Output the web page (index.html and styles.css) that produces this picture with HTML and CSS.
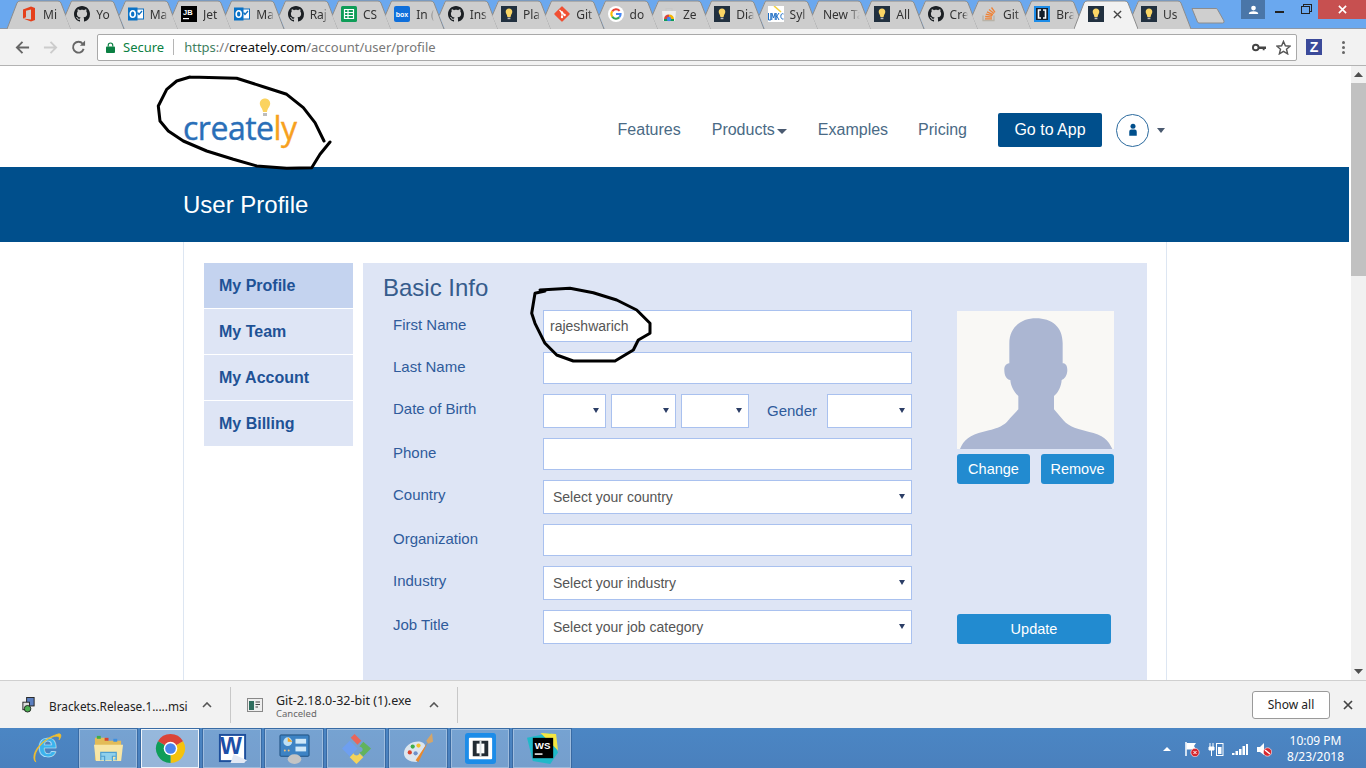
FILE: index.html
```html
<!DOCTYPE html>
<html lang="en">
<head>
<meta charset="utf-8">
<title>User Profile</title>
<link rel="stylesheet" href="styles.css">
</head>
<body>
<svg class="sprite" aria-hidden="true">
  <symbol id="tab-first" viewBox="0 0 64 29"><path d="M0 29L10 3Q11 1 13 1H51Q53 1 54 3L64 29Z" fill="#cdcdcd"/><path d="M0 29L10 3Q11 1 13 1H51Q53 1 54 3L64 29" fill="none" stroke="#8c8c8c"/></symbol>
  <symbol id="tab-mid" viewBox="0 0 64 29"><path d="M11 1L5.3 15.4L10.7 29H64L54 3Q53 1 51 1Z" fill="#cdcdcd"/><path d="M11.5 1L5.3 15.4M11.5 1H51Q53 1 54 3L64 29" fill="none" stroke="#8c8c8c"/></symbol>
  <symbol id="tab-active" viewBox="0 0 64 29"><path d="M0 29L10 3Q11 1 13 1H51Q53 1 54 3L64 29Z" fill="#f2f2f2"/><path d="M0 29L10 3Q11 1 13 1H51Q53 1 54 3L64 29" fill="none" stroke="#8c8c8c"/></symbol>
  <symbol id="i-office" viewBox="0 0 16 16"><path d="M2 3.500L10 0.500L14 2V14L10 15.500L2 12.500L10 13.500V3.500L5 4.700V11.300L2 12.500Z" fill="#e5401b"/></symbol>
  <symbol id="i-github" viewBox="0 0 16 16"><path fill="#1b1f23" d="M8 0C3.58 0 0 3.58 0 8c0 3.54 2.29 6.53 5.47 7.59.4.07.55-.17.55-.38 0-.19-.01-.82-.01-1.49-2.01.37-2.53-.49-2.69-.94-.09-.23-.48-.94-.82-1.13-.28-.15-.68-.52-.01-.53.63-.01 1.08.58 1.23.82.72 1.21 1.87.87 2.33.66.07-.52.28-.87.51-1.07-1.78-.2-3.64-.89-3.64-3.95 0-.87.31-1.59.82-2.15-.08-.2-.36-1.02.08-2.12 0 0 .67-.21 2.2.82.64-.18 1.32-.27 2-.27.68 0 1.36.09 2 .27 1.53-1.04 2.2-.82 2.2-.82.44 1.1.16 1.92.08 2.12.51.56.82 1.27.82 2.15 0 3.07-1.87 3.75-3.65 3.95.29.25.54.73.54 1.48 0 1.07-.01 1.93-.01 2.2 0 .21.15.46.55.38A8.013 8.013 0 0016 8c0-4.42-3.58-8-8-8z"/></symbol>
  <symbol id="i-outlook" viewBox="0 0 16 16"><rect x="7" y="3" width="8.500" height="10" fill="#fff" stroke="#0d6fc0"/><path d="M9.500 6.500L11 8.500L14 5" stroke="#0d6fc0" fill="none" stroke-width="1.300"/><rect x="0" y="1.500" width="9.500" height="13" fill="#0a72c6"/><ellipse cx="4.700" cy="8" rx="2.500" ry="3.300" fill="none" stroke="#fff" stroke-width="1.600"/></symbol>
  <symbol id="i-sheets" viewBox="0 0 16 16"><rect width="16" height="16" rx="1.500" fill="#0f9d58"/><path d="M3.500 3.500H12.500V12.500H3.500ZM3.500 6.500H12.500M3.500 9.500H12.500M7 3.500V12.500" fill="none" stroke="#fff" stroke-width="1.200"/></symbol>
  <symbol id="i-bulb" viewBox="0 0 16 16"><rect width="16" height="16" fill="#21303f"/><path d="M8 2.500C5.900 2.500 4.700 4 4.700 5.800C4.700 7.500 6 8.500 6.400 11H9.600C10 8.500 11.300 7.500 11.300 5.800C11.300 4 10.100 2.500 8 2.500Z" fill="#fad565"/><rect x="6.600" y="11.600" width="2.800" height="1.600" fill="#b9b9b9"/></symbol>
  <symbol id="i-git" viewBox="0 0 16 16"><rect x="2.300" y="2.300" width="11.400" height="11.400" rx="1" transform="rotate(45 8 8)" fill="#f05033"/><path d="M5.500 4L8 6.500V11M8 6.500L10.600 9" stroke="#fff" stroke-width="1.100" fill="none"/><circle cx="8" cy="11" r="1.200" fill="#fff"/><circle cx="8" cy="6.500" r="1.200" fill="#fff"/><circle cx="10.600" cy="9" r="1.200" fill="#fff"/></symbol>
  <symbol id="i-google" viewBox="0 0 16 16"><circle cx="8" cy="8" r="8" fill="#fff"/><path d="M11.600 4.900A4.600 4.600 0 0 0 4.200 5.400" fill="none" stroke="#ea4335" stroke-width="2"/><path d="M4.200 5.400A4.600 4.600 0 0 0 4.200 10.600" fill="none" stroke="#fbbc05" stroke-width="2"/><path d="M4.200 10.600A4.600 4.600 0 0 0 11.400 11.200" fill="none" stroke="#34a853" stroke-width="2"/><path d="M11.400 11.200A4.600 4.600 0 0 0 12.600 8H8" fill="none" stroke="#4285f4" stroke-width="2"/></symbol>
  <symbol id="i-store" viewBox="0 0 16 16"><path d="M1 5H15L14 15H2Z" fill="#eeeeee"/><path d="M5 5V2.500H11V5" fill="none" stroke="#c8c8c8" stroke-width="1.200"/><path d="M3 13A5 5 0 0 1 8 8.500L8 13Z" fill="#db4437"/><path d="M8 8.500A5 5 0 0 1 13 13H8Z" fill="#f4b400"/><path d="M3 13H13V15H3Z" fill="#0f9d58"/><circle cx="8" cy="13" r="2.200" fill="#4285f4"/></symbol>
  <symbol id="i-umkc" viewBox="0 0 16 16"><rect width="16" height="16" fill="#fff"/><path d="M6 0L13 6" stroke="#f5d23c" stroke-width="1.600"/><path d="M0.500 7V14H2.800V7M3.800 14V7L5.500 12L7.200 7V14M8.200 7V14M8.200 11L11 7M8.800 10L11 14M15.500 8C12 6 11.800 14 15.500 13" fill="none" stroke="#1f6fc4"/></symbol>
  <symbol id="i-so" viewBox="0 0 16 16"><path d="M2 9.500V14.500H13V9.500" fill="none" stroke="#b8b2a7" stroke-width="1.300"/><path d="M4 12.800H11M4.200 10.500L11 11.200M4.800 8.200L11.400 9.700M6 5.800L12 8.600M8 3.500L13 7.400M10.500 1.500L14 6.300" fill="none" stroke="#ef8236" stroke-width="1.300"/></symbol>
  <symbol id="i-brackets" viewBox="0 0 16 16"><rect width="16" height="16" fill="#1c8ce8"/><rect x="2" y="2" width="12" height="12" fill="#141f2b"/><path d="M7 4H4.500V12H7M9 4H11.500V12H9" fill="none" stroke="#fff" stroke-width="1.600"/></symbol>
</svg>

<header class="tabstrip">
  <div class="tabs">
    <div class="tab"><svg class="tab-shape"><use href="#tab-first"/></svg><svg class="fav"><use href="#i-office"/></svg><span class="tab-title">Mi</span></div>
    <div class="tab"><svg class="tab-shape"><use href="#tab-mid"/></svg><svg class="fav"><use href="#i-github"/></svg><span class="tab-title">Yo</span></div>
    <div class="tab"><svg class="tab-shape"><use href="#tab-mid"/></svg><svg class="fav"><use href="#i-outlook"/></svg><span class="tab-title">Ma</span></div>
    <div class="tab"><svg class="tab-shape"><use href="#tab-mid"/></svg><svg class="fav" viewBox="0 0 16 16"><rect width="16" height="16" fill="#000"/><text x="2" y="8.500" class="icon-jb">JB</text><rect x="2" y="12" width="6" height="1.200" fill="#fff"/></svg><span class="tab-title">Jet</span></div>
    <div class="tab"><svg class="tab-shape"><use href="#tab-mid"/></svg><svg class="fav"><use href="#i-outlook"/></svg><span class="tab-title">Ma</span></div>
    <div class="tab"><svg class="tab-shape"><use href="#tab-mid"/></svg><svg class="fav"><use href="#i-github"/></svg><span class="tab-title">Raj</span></div>
    <div class="tab"><svg class="tab-shape"><use href="#tab-mid"/></svg><svg class="fav"><use href="#i-sheets"/></svg><span class="tab-title">CS</span></div>
    <div class="tab"><svg class="tab-shape"><use href="#tab-mid"/></svg><svg class="fav" viewBox="0 0 16 16"><rect width="16" height="16" rx="2" fill="#0f6fdb"/><text x="8" y="10.500" class="icon-box">box</text></svg><span class="tab-title">In (</span></div>
    <div class="tab"><svg class="tab-shape"><use href="#tab-mid"/></svg><svg class="fav"><use href="#i-github"/></svg><span class="tab-title">Ins</span></div>
    <div class="tab"><svg class="tab-shape"><use href="#tab-mid"/></svg><svg class="fav"><use href="#i-bulb"/></svg><span class="tab-title">Pla</span></div>
    <div class="tab"><svg class="tab-shape"><use href="#tab-mid"/></svg><svg class="fav"><use href="#i-git"/></svg><span class="tab-title">Git</span></div>
    <div class="tab"><svg class="tab-shape"><use href="#tab-mid"/></svg><svg class="fav"><use href="#i-google"/></svg><span class="tab-title">do</span></div>
    <div class="tab"><svg class="tab-shape"><use href="#tab-mid"/></svg><svg class="fav"><use href="#i-store"/></svg><span class="tab-title">Ze</span></div>
    <div class="tab"><svg class="tab-shape"><use href="#tab-mid"/></svg><svg class="fav"><use href="#i-bulb"/></svg><span class="tab-title">Dia</span></div>
    <div class="tab"><svg class="tab-shape"><use href="#tab-mid"/></svg><svg class="fav"><use href="#i-umkc"/></svg><span class="tab-title">Syl</span></div>
    <div class="tab tab-plain"><svg class="tab-shape"><use href="#tab-mid"/></svg><span class="tab-title">New Ta</span></div>
    <div class="tab"><svg class="tab-shape"><use href="#tab-mid"/></svg><svg class="fav"><use href="#i-bulb"/></svg><span class="tab-title">All</span></div>
    <div class="tab"><svg class="tab-shape"><use href="#tab-mid"/></svg><svg class="fav"><use href="#i-github"/></svg><span class="tab-title">Cre</span></div>
    <div class="tab"><svg class="tab-shape"><use href="#tab-mid"/></svg><svg class="fav"><use href="#i-so"/></svg><span class="tab-title">Git</span></div>
    <div class="tab"><svg class="tab-shape"><use href="#tab-mid"/></svg><svg class="fav"><use href="#i-brackets"/></svg><span class="tab-title">Bra</span></div>
    <div class="tab tab-active"><svg class="tab-shape"><use href="#tab-active"/></svg><svg class="fav"><use href="#i-bulb"/></svg><svg class="tab-close" viewBox="0 0 10 10"><path d="M1 1L9 9M9 1L1 9" stroke="#444" stroke-width="1.500"/></svg></div>
    <div class="tab"><svg class="tab-shape"><use href="#tab-mid"/></svg><svg class="fav"><use href="#i-bulb"/></svg><span class="tab-title">Us</span></div>
  </div>
  <svg class="newtab" viewBox="0 0 34 17"><path d="M1 1.500H25Q26 1.500 26.500 2.500L33 14Q33.500 16 31.500 16H8Q7 16 6.500 15Z" fill="#cfcfcf" stroke="#8c8c8c"/></svg>
  <div class="winctl">
    <div class="win-user"><svg viewBox="0 0 14 12" class="win-user-ico"><circle cx="7" cy="3.500" r="3" fill="#fff"/><path d="M1 11Q1 7.500 7 7.500T13 11Z" fill="#fff"/></svg></div>
    <div class="win-btn"><span class="win-min"></span></div>
    <div class="win-btn"><span class="win-max"></span></div>
    <div class="win-close"><svg viewBox="0 0 10 10" class="win-x"><path d="M1 1L9 9M9 1L1 9" stroke="#fff" stroke-width="1.800"/></svg></div>
  </div>
</header>

<nav class="toolbar">
  <svg class="tb-ico" viewBox="0 0 16 16"><path d="M15 8H2.500M8 2L2 8L8 14" fill="none" stroke="#666" stroke-width="2"/></svg>
  <svg class="tb-ico tb-fwd" viewBox="0 0 16 16"><path d="M1 8H13.500M8 2L14 8L8 14" fill="none" stroke="#ccc" stroke-width="2"/></svg>
  <svg class="tb-ico tb-reload" viewBox="0 0 16 16"><path d="M13.500 9.500A5.800 5.800 0 1 1 12.500 4" fill="none" stroke="#666" stroke-width="2"/><path d="M9.500 6H15V0.500Z" fill="#666"/></svg>
  <div class="omnibox">
    <svg class="lock" viewBox="0 0 10 12"><path d="M2.500 5V3.500A2.500 2.500 0 0 1 7.500 3.500V5" fill="none" stroke="#0b8043" stroke-width="1.300"/><rect y="5" width="10" height="7" rx="1" fill="#0b8043"/></svg>
    <span class="secure">Secure</span>
    <span class="omni-sep"></span>
    <span class="url"><span class="url-scheme">https</span><span class="url-path">://</span><span class="url-host">creately.com</span><span class="url-path">/account/user/profile</span></span>
    <svg class="key" viewBox="0 0 15 9"><circle cx="4" cy="4.500" r="3" fill="none" stroke="#444" stroke-width="2"/><path d="M7 3.500H15V6H13.500V7.500H11.500V6H7Z" fill="#444"/></svg>
    <svg class="star" viewBox="0 0 16 16"><path d="M8 1.500L10 6.200L15 6.600L11.200 9.900L12.400 14.800L8 12.200L3.600 14.800L4.800 9.900L1 6.600L6 6.200Z" fill="none" stroke="#555" stroke-width="1.500"/></svg>
  </div>
  <span class="ext-z">Z</span>
  <span class="menu-dots"><i></i><i></i><i></i></span>
</nav>

<div class="viewport">
  <main class="page">
    <div class="site-head">
      <a class="logo"><span class="logo-blue">create</span><span class="logo-orange">ly</span>
        <svg class="logo-bulb" viewBox="0 0 12 19"><path d="M6 0.500C3 0.500 0.800 2.800 0.800 5.500C0.800 8.500 3.500 10 4 14H8C8.500 10 11.200 8.500 11.200 5.500C11.200 2.800 9 0.500 6 0.500Z" fill="#fbd35f"/><rect x="4" y="15" width="4" height="3" fill="#bdbdbd"/></svg>
      </a>
      <div class="site-nav">
        <span class="nav-link">Features</span>
        <span class="nav-link">Products<i class="caret"></i></span>
        <span class="nav-link nav-link-tight">Examples</span>
        <span class="nav-link">Pricing</span>
        <span class="goapp">Go to App</span>
        <span class="avatar-btn"><svg viewBox="0 0 12 16" class="avatar-ico"><circle cx="6" cy="3.500" r="3" fill="#004f8c"/><path d="M1.500 15V10Q1.500 7.500 4 7.500H8Q10.500 7.500 10.500 10V15Z" fill="#004f8c"/></svg></span>
        <i class="caret caret-user"></i>
      </div>
    </div>
    <div class="banner"><h1 class="banner-title">User Profile</h1></div>
    <div class="content">
      <ul class="side">
        <li class="side-item side-on">My Profile</li>
        <li class="side-item">My Team</li>
        <li class="side-item">My Account</li>
        <li class="side-item">My Billing</li>
      </ul>
      <section class="panel">
        <h2 class="panel-title">Basic Info</h2>
        <div class="panel-body">
          <form class="form">
            <div class="row"><label class="lbl">First Name</label><input class="field" value="rajeshwarich"></div>
            <div class="row"><label class="lbl">Last Name</label><input class="field"></div>
            <div class="row row-sel"><label class="lbl">Date of Birth</label>
              <div class="dob">
                <span class="sel sel-d"><select class="field"><option></option></select></span>
                <span class="sel sel-m"><select class="field"><option></option></select></span>
                <span class="sel sel-y"><select class="field"><option></option></select></span>
                <span class="gender-lbl">Gender</span>
                <span class="sel sel-g"><select class="field"><option></option></select></span>
              </div>
            </div>
            <div class="row"><label class="lbl">Phone</label><input class="field"></div>
            <div class="row row-sel"><label class="lbl">Country</label><span class="sel"><select class="field"><option>Select your country</option></select></span></div>
            <div class="row"><label class="lbl">Organization</label><input class="field"></div>
            <div class="row row-sel"><label class="lbl">Industry</label><span class="sel"><select class="field"><option>Select your industry</option></select></span></div>
            <div class="row row-sel"><label class="lbl">Job Title</label><span class="sel"><select class="field"><option>Select your job category</option></select></span></div>
          </form>
          <aside class="photo">
            <div class="photo-box">
              <svg viewBox="51 33 471 414" class="silhouette"><path d="M60 447C70 420 90 405 130 395C180 385 195 375 210 355L235 328V288C220 275 212 255 211 240C198 238 192 225 193 205C195 192 205 190 208 190V130C208 80 245 55 288 55C335 55 368 80 368 130V190C375 190 382 195 382 210C382 228 372 238 365 240C364 258 355 278 342 288V328L365 355C380 375 400 385 445 395C490 405 505 420 517 447Z" fill="#abb6d2"/></svg>
            </div>
            <div class="photo-btns"><span class="btn">Change</span><span class="btn">Remove</span></div>
            <span class="btn btn-update">Update</span>
          </aside>
        </div>
      </section>
    </div>
  </main>
  <div class="scrollbar">
    <svg class="sb-arrow" viewBox="0 0 9 5"><path d="M0 5L4.500 0L9 5Z" fill="#505050"/></svg>
    <div class="sb-track"><div class="sb-thumb"></div></div>
    <svg class="sb-arrow" viewBox="0 0 9 5"><path d="M0 0L4.500 5L9 0Z" fill="#505050"/></svg>
  </div>
</div>

<section class="dlbar">
  <div class="dl dl-1">
    <svg class="dl-ico" viewBox="0 0 16 18"><rect x="6" y="1" width="8" height="9" fill="#5b7fc0" stroke="#222"/><rect x="2" y="6" width="7" height="8" fill="#ddd" stroke="#222"/><circle cx="7" cy="13" r="3.500" fill="#4caf50" stroke="#222"/></svg>
    <span class="dl-name">Brackets.Release.1.....msi</span>
    <svg class="chev" viewBox="0 0 10 6"><path d="M1 5L5 1L9 5" fill="none" stroke="#555" stroke-width="1.600"/></svg>
  </div>
  <div class="dl dl-2">
    <svg class="dl-ico dl-ico2" viewBox="0 0 16 14"><rect x="0.500" y="0.500" width="15" height="13" fill="#eee" stroke="#888"/><rect x="2" y="3" width="5" height="9" fill="#2f6d5e"/><path d="M8.500 4H13M8.500 6.500H13M8.500 9H11" stroke="#444"/></svg>
    <div class="dl-text"><span class="dl-name">Git-2.18.0-32-bit (1).exe</span><span class="dl-status">Canceled</span></div>
    <svg class="chev" viewBox="0 0 10 6"><path d="M1 5L5 1L9 5" fill="none" stroke="#555" stroke-width="1.600"/></svg>
  </div>
  <span class="showall">Show all</span>
  <svg class="dl-close" viewBox="0 0 10 10"><path d="M1 1L9 9M9 1L1 9" stroke="#444" stroke-width="1.700"/></svg>
</section>

<footer class="taskbar">
  <div class="task task-ie">
    <svg viewBox="0 0 32 32" class="task-ico"><text x="17" y="25" class="ie-e">e</text><path d="M5 30C-1 25 6 8 28 1C31 0 32 3 29 7C31 2 24 3 20 5C9 10 1 23 5 30Z" fill="#f5c02c" stroke="#f5c02c" stroke-width="0.800"/></svg>
  </div>
  <div class="task"><svg viewBox="0 0 32 32" class="task-ico"><path d="M2 5H13L15 8H29V28H2Z" fill="#e3bc58"/><path d="M1 12H31L29 29H3Z" fill="#f8e6a6"/><path d="M8 28V20H24V28M8 24H12V29M24 24H20V29" fill="#8fd0ec" stroke="#4f9fd0" stroke-width="1.200"/><rect x="4" y="3" width="4" height="3" fill="#3fae49"/><rect x="12" y="5" width="4" height="3" fill="#d8432f"/><rect x="21" y="6" width="4" height="3" fill="#3d8fe0"/></svg></div>
  <div class="task task-on"><svg viewBox="0 0 32 32" class="task-ico"><path d="M16 16L3 8.500A15 15 0 0 1 29 8.500Z" fill="#db4437"/><path d="M16 16L29 8.500A15 15 0 0 1 16 31Z" fill="#f4c20d"/><path d="M16 16L16 31A15 15 0 0 1 3 8.500Z" fill="#0f9d58"/><circle cx="16" cy="16" r="7" fill="#fff"/><circle cx="16" cy="16" r="5.500" fill="#4a85ec"/></svg></div>
  <div class="task"><svg viewBox="0 0 32 32" class="task-ico"><rect x="3" y="2" width="26" height="27" fill="#fff" stroke="#1d4f9c" stroke-width="2"/><path d="M17 22L31 28L28 31H14Z" fill="#e3e9f4"/><text x="14.500" y="22" class="word-w">W</text></svg></div>
  <div class="task"><svg viewBox="0 0 32 32" class="task-ico"><rect x="1" y="2" width="30" height="22" rx="1" fill="#3d83c4" stroke="#1d4f80"/><circle cx="9" cy="9" r="4.500" fill="#bde0f5"/><path d="M9 4.500L14 9L9 9Z" fill="#f5a623"/><circle cx="6" cy="18" r="1" fill="#f5c27a"/><circle cx="10" cy="18" r="1" fill="#f5c27a"/><rect x="17" y="6" width="11" height="5" fill="#cfe8f8"/><rect x="17" y="14" width="11" height="5" fill="#cfe8f8"/><ellipse cx="16" cy="27" rx="7" ry="5" fill="#c4c4c4"/></svg></div>
  <div class="task"><svg viewBox="0 0 32 32" class="task-ico"><path d="M1 16L9 8L17 16L9 24Z" fill="#6e9ff0"/><path d="M10 5L14 1L21 8L17 12Z" fill="#e8665a"/><path d="M19 14L23 9L31 16L23 24L19 20C23 20 24 15 19 14Z" fill="#62b35c"/><path d="M9 25L13 21C14 24 18 24 19 21L23 25L16 32Z" fill="#f5d35a"/></svg></div>
  <div class="task"><svg viewBox="0 0 32 32" class="task-ico"><path d="M1 21C1 13 10 8 18 9C22 10 24 13 22 15L14 30C7 30 1 27 1 21Z" fill="#dde6ee"/><circle cx="7" cy="20" r="2.200" fill="#d8432f"/><circle cx="10" cy="14" r="2.200" fill="#3fae49"/><circle cx="16" cy="13" r="2.200" fill="#f5c02c"/><circle cx="13" cy="21" r="2.200" fill="#6f90c8"/><path d="M26 9L16 30L13 28Z" fill="#e8892e"/><path d="M24 8L30 0L31 9L26 11Z" fill="#d3a56a"/></svg></div>
  <div class="task"><svg viewBox="0 0 32 32" class="task-ico"><rect x="0" y="0" width="32" height="32" rx="3" fill="#1c8ce8"/><rect x="4" y="5" width="24" height="22" rx="1" fill="#fff"/><rect x="8" y="8" width="16" height="16" fill="#222b33"/><rect x="12" y="11" width="8" height="10" fill="#fff"/><rect x="15" y="8" width="2" height="16" fill="#dfe3e6"/></svg></div>
  <div class="task"><svg viewBox="0 0 32 32" class="task-ico"><path d="M0 5L24 0L32 20L24 32L6 29Z" fill="#1fb9c9"/><path d="M14 0L30 1L32 18Z" fill="#f5e642"/><rect x="6" y="5" width="21" height="21" fill="#000"/><text x="8" y="16.500" class="ws-t">WS</text><rect x="8" y="21" width="8" height="1.500" fill="#fff"/></svg></div>
  <div class="tray">
    <i class="tray-up"></i>
    <svg class="tray-ico" viewBox="0 0 16 16"><path d="M2 1V15" stroke="#fff" stroke-width="1.500"/><path d="M2.500 2H12L10 5L12 8.500H2.500Z" fill="#fff"/><circle cx="11" cy="11.500" r="4.200" fill="#d7282f" stroke="#fff" stroke-width="0.600"/><path d="M9.500 10L12.500 13M12.500 10L9.500 13" stroke="#fff"/></svg>
    <svg class="tray-ico" viewBox="0 0 16 16"><path d="M1 6H6V9H1ZM2 2V6M5 2V6M3.500 9V15" fill="#fff" stroke="#fff"/><rect x="8.500" y="2.500" width="6.500" height="12" fill="none" stroke="#fff"/><rect x="10" y="6" width="3.500" height="7" fill="#fff"/></svg>
    <svg class="tray-ico" viewBox="0 0 16 16"><path d="M0 12H2.500V14H0ZM3.500 10H6V14H3.500ZM7 8H9.500V14H7ZM10.500 5H13V14H10.500ZM14 3H16V14H14Z" fill="#fff"/></svg>
    <svg class="tray-ico" viewBox="0 0 16 16"><path d="M1 6H4L8 2V14L4 11H1Z" fill="#fff"/><circle cx="11.500" cy="11" r="4.200" fill="#d7282f" stroke="#fff" stroke-width="0.600"/><path d="M9 9L14 13" stroke="#fff" stroke-width="1.400"/></svg>
    <div class="clock"><span>10:09 PM</span><span>8/23/2018</span></div>
  </div>
</footer>

<svg class="scribbles" viewBox="0 0 1366 768" aria-hidden="true">
  <path d="M190 77L236.700 78.300L263.300 86.700L286.700 94.300L303.300 107.700L315 122.700L324 141M330 142L320 154.300L311.700 167.700L286.700 168.300L256.700 166L233.300 159.300L206.700 151L183.300 141L168.300 131L160 121L158.300 106L166.700 89.300L176.700 81L190 77"/>
  <path d="M540 290L570 288.300L593.300 292.700L616.700 300L636.700 310L650 323.300L650 333.300L638.300 340L633.300 350L615 361L573.300 361L556.700 355L545 343.300L535 323.300L531.700 313.300L535 293.300L545 291"/>
</svg>
</body>
</html>
```

FILE: styles.css
```css
* { box-sizing: border-box; }
html, body { margin: 0; padding: 0; }
body {
  position: relative;
  width: 1366px;
  height: 768px;
  overflow: hidden;
  display: flex;
  flex-direction: column;
  font-family: "Liberation Sans", Arial, sans-serif;
  background: #fff;
}
.sprite { position: absolute; width: 0; height: 0; }
.icon-jb { font: 700 7.5px "Liberation Sans", sans-serif; fill: #fff; }
.icon-box { font: 700 7px "Liberation Sans", sans-serif; fill: #fff; text-anchor: middle; }

/* tab strip */
.tabstrip {
  flex: 0 0 29px;
  display: flex;
  align-items: flex-start;
  background: #6aa8ef;
  border-bottom: 1px solid #8c97a6;
  padding-left: 7px;
}
.tabs { display: flex; height: 28px; }
.tab {
  position: relative;
  flex: 0 0 53.33px;
  min-width: 0;
  height: 28px;
  display: flex;
  align-items: center;
  gap: 6px;
  padding: 0 0 0 14px;
  font: 12px "Noto Sans", "Open Sans", sans-serif;
  color: #333;
}
.tab-plain { padding-left: 16px; }
.tab-active { z-index: 1; }
.tab-shape { position: absolute; left: 0; top: 0; width: 64px; height: 29px; }
.fav { position: relative; flex: 0 0 16px; width: 16px; height: 16px; }
.tab-title {
  position: relative;
  flex: 0 0 18px;
  width: 18px;
  white-space: nowrap;
  -webkit-mask-image: linear-gradient(90deg, #000 70%, transparent);
  mask-image: linear-gradient(90deg, #000 70%, transparent);
}
.tab-plain .tab-title { flex-basis: 37px; width: 37px; }
.tab-close { position: relative; width: 9px; height: 9px; margin-left: 3px; }
.newtab { flex: 0 0 34px; width: 34px; height: 17px; margin: 7px 0 0 11px; }
.winctl { display: flex; margin-left: auto; height: 19px; }
.win-user { width: 24px; height: 19px; background: #4a76a8; display: flex; align-items: center; justify-content: center; margin-right: 1px; }
.win-user-ico { width: 11px; height: 10px; }
.win-btn { width: 26px; height: 19px; display: flex; align-items: center; justify-content: center; }
.win-min { width: 9px; height: 2px; background: #222; margin-top: 5px; }
.win-max { width: 9px; height: 8px; border: 1px solid #222; box-shadow: 2px -2px 0 -1px #6aa8ef, 2px -2px 0 0 #222; }
.win-close { width: 48px; height: 19px; background: #c75050; display: flex; align-items: center; justify-content: center; }
.win-x { width: 9px; height: 9px; }

/* toolbar */
.toolbar {
  flex: 0 0 37px;
  display: flex;
  align-items: center;
  background: #f2f2f2;
  border-bottom: 1px solid #b3b3b3;
  padding-left: 15px;
}
.tb-ico { width: 15px; height: 15px; flex: none; }
.tb-fwd { margin-left: 13px; }
.tb-reload { margin-left: 13px; }
.omnibox {
  width: 1200px;
  height: 27px;
  margin-left: 11px;
  background: #fff;
  border: 1px solid #a9a9a9;
  border-radius: 2px;
  display: flex;
  align-items: center;
  padding-left: 8px;
  font: 13px "Noto Sans", "Open Sans", sans-serif;
}
.lock { width: 9px; height: 11px; flex: none; }
.secure { color: #0b8043; margin-left: 8px; }
.omni-sep { width: 1px; height: 16px; background: #b5b5b5; margin: 0 10px 0 9px; }
.url-scheme { color: #3f7f5f; }
.url-host { color: #111; }
.url-path { color: #777; }
.key { width: 14px; height: 9px; margin-left: auto; }
.star { width: 15px; height: 15px; margin: 0 5px 0 10px; }
.ext-z {
  width: 16px; height: 16px; margin-left: 9px;
  background: #3b4a9a; color: #fff;
  font: 700 14px/16px "Liberation Sans", sans-serif; text-align: center;
}
.menu-dots { display: flex; flex-direction: column; gap: 2px; margin-left: 20px; }
.menu-dots i { width: 3px; height: 3px; border-radius: 50%; background: #666; }

/* page */
.viewport { flex: 1 1 0; min-height: 0; display: flex; }
.page { flex: 0 0 1349px; width: 1349px; overflow: hidden; }
.site-head {
  height: 101px;
  padding-left: 183px;
  display: flex;
}
.logo {
  position: relative;
  width: 120px;
  margin-top: 42px;
  font: 32px/40px "Open Sans", sans-serif;
  letter-spacing: -0.5px;
  white-space: nowrap;
  -webkit-text-stroke: 0.4px currentColor;
}
.logo-blue { color: #2a6fb8; }
.logo-orange { color: #f7a11e; }
.logo-bulb { position: absolute; left: 76px; top: -10px; width: 12px; height: 19px; }
.site-nav {
  width: 869px;
  margin-left: auto;
  margin-right: 184px;
  display: flex;
  align-items: center;
  justify-content: flex-end;
  font-size: 16px;
  color: #4a6a85;
  padding-top: 27px;
  height: 100%;
  padding-bottom: 0;
}
.nav-link { margin-right: 31px; white-space: nowrap; }
.nav-link-tight { margin-right: 30px; }
.caret {
  display: inline-block;
  margin-left: 2px;
  vertical-align: 1px;
  border: 5px solid transparent;
  border-top-color: #4a5a70;
  border-bottom: 0;
}
.goapp {
  width: 104px; height: 34px;
  background: #004f8c; color: #fff;
  border-radius: 2px;
  text-align: center;
  line-height: 34px;
  white-space: nowrap;
}
.avatar-btn {
  width: 33px; height: 33px; margin-left: 14px;
  border: 1px solid #2b6a9e; border-radius: 50%;
  display: flex; align-items: center; justify-content: center;
}
.avatar-ico { width: 10px; height: 14px; }
.caret-user { margin-left: 8px; border-width: 5px 4px 0; }
.banner { height: 75px; background: #004f8c; padding-left: 183px; display: flex; align-items: center; }
.banner-title { margin: 0; font: 400 24px "Liberation Sans", sans-serif; color: #fff; }
.content {
  width: 984px;
  margin-left: 183px;
  height: 438px;
  padding: 21px 20px 0 20px;
  border-left: 1px solid #dde6f2;
  border-right: 1px solid #dde6f2;
  display: flex;
  gap: 10px;
}
.side { list-style: none; margin: 0; padding: 0; flex: 0 0 149px; display: flex; flex-direction: column; gap: 1px; }
.side-item {
  height: 45px;
  padding-left: 15px;
  background: #dee5f5;
  color: #1e5296;
  font-weight: 700;
  font-size: 16px;
  line-height: 45px;
}
.side-on { background: #c4d3ef; }
.panel { flex: 0 0 784px; background: #dee5f5; padding: 0 20px; }
.panel-title { margin: 0; padding-top: 11px; font: 400 24px/28px "Liberation Sans", sans-serif; color: #365c8c; }
.panel-body { display: flex; margin-top: 8px; }
.form { flex: 0 0 529px; padding-left: 10px; display: flex; flex-direction: column; gap: 10px; }
.row { display: flex; height: 32px; align-items: flex-start; }
.row-sel { height: 34px; }
.lbl { flex: 0 0 150px; padding-top: 6px; font-size: 15px; line-height: 18px; color: #2f5b9b; }
.field {
  width: 369px; height: 100%;
  border: 1px solid #a9c1ef;
  border-radius: 0;
  background: #fff;
  padding: 0 6px;
  font: 14px "Liberation Sans", sans-serif;
  color: #555;
  appearance: none;
  -webkit-appearance: none;
  outline: 0;
  margin: 0;
}
.row > .field { height: 32px; }
select.field { padding-left: 9px; }
.sel { position: relative; display: block; height: 34px; width: 369px; flex: none; }
.sel .field { display: block; width: 100%; height: 34px; }
.sel::after {
  content: "";
  position: absolute;
  right: 7px;
  top: 14px;
  border: 3.5px solid transparent;
  border-top: 5px solid #2c3e66;
  border-bottom: 0;
}
.dob { display: flex; align-items: center; width: 369px; height: 34px; }
.sel-d { width: 63px; }
.sel-m { width: 65px; margin-left: 5px; }
.sel-y { width: 68px; margin-left: 5px; }
.gender-lbl { width: 78px; padding: 0 0 2px 18px; font-size: 15px; color: #2f5b9b; }
.sel-g { width: 85px; }
.photo { flex: 0 0 157px; margin-left: 45px; padding-top: 1px; display: flex; flex-direction: column; height: 334px; }
.photo-box { height: 138px; background: #f9f8f5; flex: none; }
.silhouette { display: block; width: 157px; height: 138px; }
.photo-btns { display: flex; justify-content: space-between; margin-top: 5px; }
.btn {
  width: 73px; height: 30px;
  background: #228bd0; color: #fff;
  border-radius: 3px;
  font-size: 14.5px;
  line-height: 30px;
  text-align: center;
}
.btn-update { width: 154px; margin-top: auto; }

/* scrollbar */
.scrollbar {
  flex: 0 0 17px;
  border-left: 2px solid #fff;
  background: #f1f1f1;
  display: flex;
  flex-direction: column;
  align-items: center;
}
.sb-arrow { flex: none; width: 9px; height: 5px; margin: 6px 0; }
.sb-track { flex: 1 1 0; width: 100%; }
.sb-thumb { height: 193px; margin-top: 0; background: #c1c1c1; }

/* downloads */
.dlbar {
  flex: 0 0 48px;
  display: flex;
  align-items: center;
  background: #f2f2f2;
  border-top: 1px solid #d0d0d0;
  font: 12px "Noto Sans", "Open Sans", sans-serif;
  color: #222;
}
.dl { height: 36px; display: flex; align-items: center; border-right: 1px solid #c8c8c8; }
.dl-1 { width: 231px; padding-left: 21px; }
.dl-2 { width: 227px; padding-left: 16px; }
.dl-ico { width: 15px; height: 18px; flex: none; }
.dl-ico2 { width: 16px; height: 14px; }
.dl-1 .dl-name { margin: 2px 0 0 13px; font-size: 11.8px; }
.dl-text { margin: 4px 0 0 13px; display: flex; flex-direction: column; line-height: 13px; }
.dl-text .dl-name { font-size: 12.5px; }
.dl-status { font-size: 9.5px; color: #666; }
.chev { width: 10px; height: 6px; margin-left: 14px; flex: none; }
.dl-text + .chev { margin-left: 18px; }
.showall {
  width: 78px; height: 28px; margin-left: auto;
  background: #fff;
  border: 1px solid #9a9a9a;
  border-radius: 3px;
  text-align: center;
  line-height: 26px;
}
.dl-close { width: 10px; height: 10px; margin: 0 13px 0 13px; }

/* taskbar */
.taskbar {
  flex: 0 0 40px;
  display: flex;
  gap: 4px;
  padding: 1px 0 0 79px;
  background: linear-gradient(#4b86c4, #4a80bd);
  position: relative;
}
.task {
  width: 58px;
  height: 39px;
  background: rgba(255,255,255,.24);
  border: 1px solid rgba(255,255,255,.3);
  box-shadow: 0 0 0 1px rgba(25,60,110,.35);
  display: flex;
  align-items: center;
  justify-content: center;
}
.task-ie { position: absolute; left: 17px; top: 1px; background: none; border: 0; box-shadow: none; }
.task-on { background: rgba(255,255,255,.42); border-color: rgba(255,255,255,.85); }
.task-ico { width: 31px; height: 31px; }
.ie-e { font: 700 36px "Liberation Sans", sans-serif; fill: #3cb2ec; stroke: #cdeeff; stroke-width: 0.6px; text-anchor: middle; }
.word-w { font: 700 24px "Liberation Sans", sans-serif; fill: #1d4fa8; text-anchor: middle; }
.ws-t { font: 700 10px "Liberation Sans", sans-serif; fill: #fff; }
.tray { margin-left: auto; display: flex; align-items: center; color: #fff; padding-right: 22px; }
.tray-up { border: 4px solid transparent; border-bottom: 4px solid #fff; border-top: 0; margin-right: 13px; }
.tray-ico { width: 16px; height: 16px; margin-right: 8px; }
.clock { display: flex; flex-direction: column; align-items: center; margin-left: 7px; font: 12px/16px "Noto Sans", "Open Sans", sans-serif; }

/* hand-drawn marks over the page */
.scribbles {
  position: absolute;
  left: 0; top: 0;
  width: 1366px; height: 768px;
  pointer-events: none;
  fill: none;
  stroke: #000;
  stroke-width: 3;
  stroke-linejoin: round;
  stroke-linecap: round;
}
```
